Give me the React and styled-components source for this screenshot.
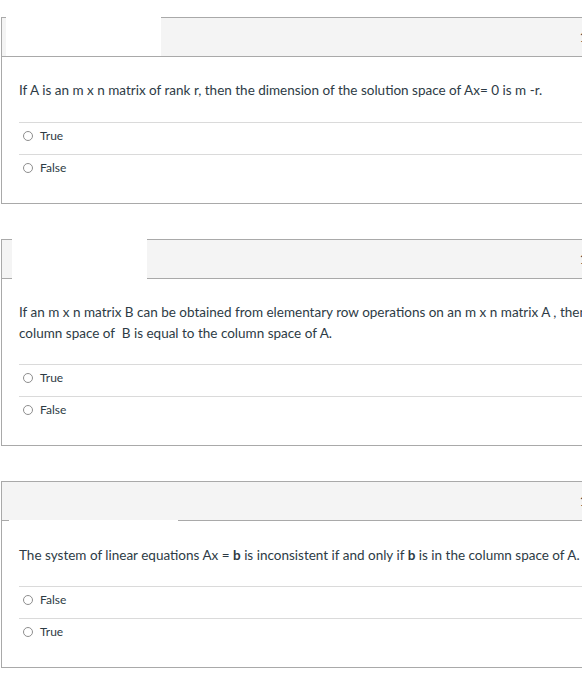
import React from 'react';
import styled, { createGlobalStyle } from 'styled-components';

const GlobalStyle = createGlobalStyle`
html, body {
  margin: 0;
  padding: 0;
  background: #fff;
  overflow: hidden;
}
body {
  font-family: 'Lato', 'Liberation Sans', sans-serif;
  color: #2d3b45;
}
`;

const Page = styled.div`
width: 582px;
height: 682px;
overflow: hidden;
padding-top: 17px;
box-sizing: border-box;
display: flex;
flex-direction: column;
gap: 35px;
`;

const Card = styled.div`
position: relative;
margin-left: 1px;
width: 660px;
border: 1px solid #a9a9a9;
background: #fff;
`;

const Header = styled.div`
height: 38px;
background: #f4f4f4;
border-bottom: 1px solid #a9a9a9;
display: flex;
align-items: center;
justify-content: flex-end;
padding-right: 54px;
`;

const Points = styled.span`
font-size: 13px;
color: #2d3b45;
`;

const Cover = styled.div`
position: absolute;
background: #fff;
left: ${(p) => p.$left}px;
top: ${(p) => p.$top}px;
width: ${(p) => p.$width}px;
height: ${(p) => p.$height}px;
`;

const Body = styled.div`
padding: ${(p) => p.$top}px 0 17px 17px;
`;

const QuestionText = styled.p`
margin: 0 0 ${(p) => p.$bottom}px;
font-size: 13.5px;
line-height: 21px;
width: 615px;
b {
  font-weight: 700;
}
`;

const Option = styled.label`
display: flex;
align-items: center;
gap: 7px;
border-top: 1px solid #dadada;
padding-left: 4px;
padding-bottom: 6px;
box-sizing: content-box;
font-size: 12px;
color: #2d3b45;
height: 25px;
`;

const Radio = styled.span`
width: 8px;
height: 8px;
border: 1px solid #8e8e8e;
border-radius: 50%;
flex-shrink: 0;
`;

const questions = [
  {
    id: 1,
    text: <>If A is an m x n matrix of rank r, then the dimension of the solution space of Ax= 0 is m -r.</>,
    options: ['True', 'False'],
    top: 23,
    bottom: 21,
    cover: { left: 4, top: -1, width: 155, height: 39 },
  },
  {
    id: 2,
    text: (
      <>
        If an m x n matrix B can be obtained from elementary row operations on an m x n matrix A , then the
        column space of &nbsp;B is equal to the column space of A.
      </>
    ),
    options: ['True', 'False'],
    top: 23,
    bottom: 20,
    cover: { left: 10, top: -5, width: 135, height: 44 },
  },
  {
    id: 3,
    text: (
      <>
        The system of linear equations Ax = <b>b</b> is inconsistent if and only if <b>b</b> is in the column space of A.
      </>
    ),
    options: ['False', 'True'],
    top: 24,
    bottom: 20,
    cover: { left: 7, top: 38, width: 169, height: 8 },
  },
];

const App = () => (
  <>
    <GlobalStyle />
    <Page>
      {questions.map((q) => (
        <Card key={q.id}>
          <Header>
            <Points>1 pts</Points>
          </Header>
          <Cover $left={q.cover.left} $top={q.cover.top} $width={q.cover.width} $height={q.cover.height} />
          <Body $top={q.top}>
            <QuestionText $bottom={q.bottom}>{q.text}</QuestionText>
            {q.options.map((opt) => (
              <Option key={opt}>
                <Radio />
                {opt}
              </Option>
            ))}
          </Body>
        </Card>
      ))}
    </Page>
  </>
);

export default App;
